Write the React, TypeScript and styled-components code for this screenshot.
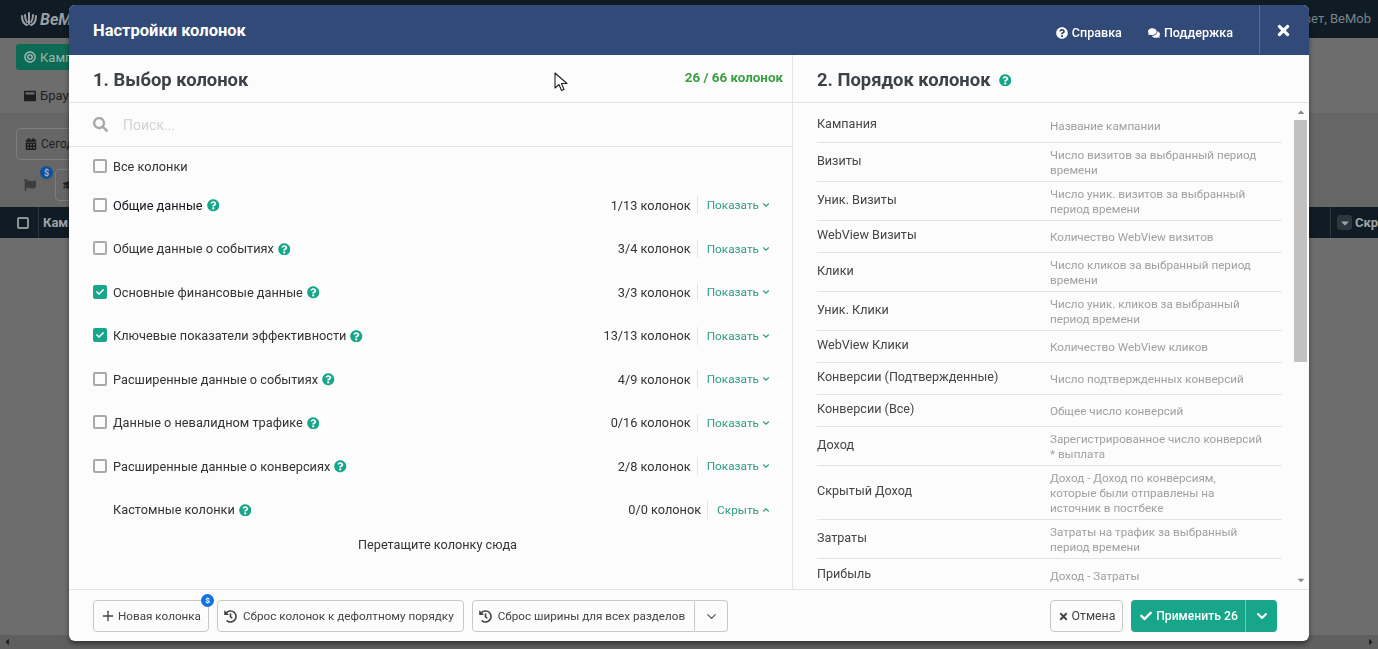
import React from "react";
import styled, { createGlobalStyle } from "styled-components";
import { FaCheck, FaComments, FaQuestionCircle, FaSearch, FaTimes, FaCalendarAlt, FaFlag, FaCaretDown, FaCaretUp, FaCaretLeft, FaCaretRight, FaBullseye, FaWindowMaximize, FaGraduationCap, FaHistory } from "react-icons/fa";
import { FiChevronDown, FiChevronUp, FiPlus } from "react-icons/fi";

const GlobalStyle = createGlobalStyle`
  html, body {
    margin: 0;
    height: 100%;
    overflow: hidden;
    background: #6d6d6d;
  }
  * {
    box-sizing: border-box;
  }
`;

type GroupType = {
  name: string;
  count: string;
  checked?: boolean;
  dark?: boolean;
};

const groups: GroupType[] = [
  { name: "Общие данные", count: "1/13 колонок", dark: true },
  { name: "Общие данные о событиях", count: "3/4 колонок" },
  { name: "Основные финансовые данные", count: "3/3 колонок", checked: true },
  { name: "Ключевые показатели эффективности", count: "13/13 колонок", checked: true },
  { name: "Расширенные данные о событиях", count: "4/9 колонок" },
  { name: "Данные о невалидном трафике", count: "0/16 колонок" },
  { name: "Расширенные данные о конверсиях", count: "2/8 колонок" },
];

const orderRows = [
  { name: "Кампания", desc: "Название кампании", height: 40 },
  { name: "Визиты", desc: "Число визитов за выбранный период времени", height: 39 },
  { name: "Уник. Визиты", desc: "Число уник. визитов за выбранный период времени", height: 39 },
  { name: "WebView Визиты", desc: "Количество WebView визитов", height: 32 },
  { name: "Клики", desc: "Число кликов за выбранный период времени", height: 39 },
  { name: "Уник. Клики", desc: "Число уник. кликов за выбранный период времени", height: 39 },
  { name: "WebView Клики", desc: "Количество WebView кликов", height: 32 },
  { name: "Конверсии (Подтвержденные)", desc: "Число подтвержденных конверсий", height: 32 },
  { name: "Конверсии (Все)", desc: "Общее число конверсий", height: 32 },
  { name: "Доход", desc: "Зарегистрированное число конверсий * выплата", height: 39 },
  { name: "Скрытый Доход", desc: "Доход - Доход по конверсиям, которые были отправлены на источник в постбеке", height: 54 },
  { name: "Затраты", desc: "Затраты на трафик за выбранный период времени", height: 39 },
  { name: "Прибыль", desc: "Доход - Затраты", height: 32 },
];

const Help = () => (
  <HelpIcon>
    <FaQuestionCircle />
  </HelpIcon>
);

export default function App() {
  return (
    <>
      <GlobalStyle />
      <Page>
        <TopBar>
          <Logo>
            <svg width="18" height="16" viewBox="0 0 18 16" fill="none" stroke="#9a9fa3" strokeWidth="2" strokeLinecap="round">
              <path d="M2 5c0 5 2 8 5 9" />
              <path d="M9 2v11" />
              <path d="M16 5c0 5-2 8-5 9" />
              <path d="M5 4c0 3 .5 5 2 7" />
              <path d="M13 4c0 3-.5 5-2 7" />
            </svg>
            BeMob
          </Logo>
          <Greeting>Привет, BeMob</Greeting>
        </TopBar>
        <TabsRow>
          <GreenTab>
            <FaBullseye />
            Кампании
          </GreenTab>
        </TabsRow>
        <BrowserRow>
          <FaWindowMaximize />
          Браузер
        </BrowserRow>
        <FilterRow>
          <DateButton>
            <FaCalendarAlt />
            Сегодня
          </DateButton>
        </FilterRow>
        <ActionRow>
          <FaFlag />
          <DollarDot>$</DollarDot>
          <GhostButton>
            <FaGraduationCap />
          </GhostButton>
        </ActionRow>
        <TableHead>
          <HeadCheck />
          <HeadCell>Кампания</HeadCell>
          <HeadRight>
            <FilterBadge>
              <FaCaretDown />
            </FilterBadge>
            Скр
          </HeadRight>
        </TableHead>
        <PageScroll>
          <FaCaretLeft />
          <FaCaretRight />
        </PageScroll>
      </Page>

      <Overlay>
        <Modal>
          <ModalHeader>
            <ModalTitle>Настройки колонок</ModalTitle>
            <HeaderLink>
              <FaQuestionCircle />
              Справка
            </HeaderLink>
            <HeaderLink>
              <FaComments />
              Поддержка
            </HeaderLink>
            <CloseButton>
              <FaTimes />
            </CloseButton>
          </ModalHeader>

          <ModalBody>
            <LeftPane>
              <SectionHeader>
                <SectionTitle>1. Выбор колонок</SectionTitle>
                <Counter>26 / 66 колонок</Counter>
              </SectionHeader>
              <SearchRow>
                <FaSearch />
                <SearchText>Поиск...</SearchText>
              </SearchRow>
              <GroupList>
                <AllRow>
                  <CheckBox />
                  <GroupName>Все колонки</GroupName>
                </AllRow>
                {groups.map((group) => (
                  <GroupRow key={group.name}>
                    <CheckBox checked={group.checked}>{group.checked && <FaCheck />}</CheckBox>
                    <GroupName dark={group.dark}>{group.name}</GroupName>
                    <Help />
                    <GroupCount>{group.count}</GroupCount>
                    <ToggleLink>
                      Показать
                      <FiChevronDown />
                    </ToggleLink>
                  </GroupRow>
                ))}
                <CustomRow>
                  <GroupName>Кастомные колонки</GroupName>
                  <Help />
                  <GroupCount>0/0 колонок</GroupCount>
                  <ToggleLink>
                    Скрыть
                    <FiChevronUp />
                  </ToggleLink>
                </CustomRow>
                <DropHint>Перетащите колонку сюда</DropHint>
              </GroupList>
            </LeftPane>

            <RightPane>
              <SectionHeader>
                <SectionTitle>2. Порядок колонок</SectionTitle>
                <Help />
              </SectionHeader>
              <OrderArea>
                <OrderList>
                  {orderRows.map((row) => (
                    <OrderRow key={row.name} rowHeight={row.height}>
                      <OrderName>{row.name}</OrderName>
                      <OrderDesc>{row.desc}</OrderDesc>
                    </OrderRow>
                  ))}
                </OrderList>
                <ScrollTrack>
                  <FaCaretUp />
                  <ScrollThumb />
                  <FaCaretDown />
                </ScrollTrack>
              </OrderArea>
            </RightPane>
          </ModalBody>

          <ModalFooter>
            <FooterButton rightPad={7}>
              <PlusIcon />
              Новая колонка
              <NewBadge>$</NewBadge>
            </FooterButton>
            <FooterButton>
              <FaHistory />
              Сброс колонок к дефолтному порядку
            </FooterButton>
            <SplitGroup>
              <FooterButton joined>
                <FaHistory />
                Сброс ширины для всех разделов
              </FooterButton>
              <CaretButton>
                <FiChevronDown />
              </CaretButton>
            </SplitGroup>
            <FooterSpacer />
            <CancelButton>
              <FaTimes />
              Отмена
            </CancelButton>
            <ApplyGroup>
              <ApplyButton>
                <FaCheck />
                Применить 26
              </ApplyButton>
              <ApplyCaret>
                <FiChevronDown />
              </ApplyCaret>
            </ApplyGroup>
          </ModalFooter>
        </Modal>
        <Cursor viewBox="0 0 14 20" width="14" height="20">
          <path d="M1 1v15l4-3.5 2.5 6 2.5-1-2.5-6H13z" fill="#fff" stroke="#222" strokeWidth="1.1" strokeLinejoin="round" />
        </Cursor>
      </Overlay>
    </>
  );
}

const Page = styled.div`
  height: 649px;
  display: flex;
  flex-direction: column;
  background: #6d6d6d;
  font-family: Roboto, sans-serif;
  color: #1c1c1c;
  overflow: hidden;
`;

const TopBar = styled.div`
  height: 38px;
  flex-shrink: 0;
  background: #101c24;
  display: flex;
  align-items: center;
  justify-content: space-between;
  padding: 0 7px 0 20px;
  color: #79848b;
`;

const Logo = styled.div`
  display: flex;
  align-items: center;
  gap: 2px;
  font-size: 16px;
  font-weight: 700;
  font-style: italic;
  color: #9a9fa3;
`;

const Greeting = styled.div`
  font-size: 13px;
  margin-top: -1px;
  white-space: nowrap;
`;

const TabsRow = styled.div`
  height: 40px;
  flex-shrink: 0;
  padding: 6px 0 0 16px;
`;

const GreenTab = styled.div`
  width: 90px;
  height: 26px;
  border-radius: 3px;
  background: #0b6b55;
  color: #9fb5ae;
  font-size: 13px;
  display: flex;
  align-items: center;
  gap: 4px;
  padding-left: 8px;
  > svg {
    font-size: 12px;
  }
`;

const BrowserRow = styled.div`
  height: 35px;
  flex-shrink: 0;
  display: flex;
  align-items: center;
  gap: 4px;
  padding: 0 0 0 24px;
  font-size: 13px;
  color: #1e1e1e;
  > svg {
    font-size: 12px;
  }
`;

const FilterRow = styled.div`
  height: 50px;
  flex-shrink: 0;
  background: #666666;
  padding: 15px 0 0 16px;
`;

const DateButton = styled.div`
  width: 90px;
  height: 32px;
  border: 1px solid #7d7d7d;
  border-radius: 4px;
  display: flex;
  align-items: center;
  gap: 4px;
  padding-left: 8px;
  font-size: 12px;
  color: #1e1e1e;
  > svg {
    font-size: 12px;
  }
`;

const ActionRow = styled.div`
  height: 44px;
  flex-shrink: 0;
  background: #666666;
  position: relative;
  display: flex;
  align-items: center;
  padding: 0 0 0 24px;
  > svg {
    font-size: 12px;
    color: #3e3e3e;
  }
`;

const DollarDot = styled.div`
  position: absolute;
  left: 40px;
  top: 3px;
  width: 13px;
  height: 13px;
  border-radius: 50%;
  background: #0f4f9c;
  color: #a8b9cf;
  font-size: 9px;
  font-weight: 700;
  display: flex;
  align-items: center;
  justify-content: center;
`;

const GhostButton = styled.div`
  width: 30px;
  height: 32px;
  margin-left: 19px;
  border: 1px solid #7d7d7d;
  border-radius: 4px;
  display: flex;
  align-items: center;
  padding-left: 7px;
  font-size: 12px;
  color: #1e1e1e;
`;

const TableHead = styled.div`
  height: 31px;
  flex-shrink: 0;
  background: #101c24;
  display: flex;
  align-items: center;
  color: #9aa3a8;
  font-size: 13px;
  font-weight: 700;
  padding-left: 17px;
`;

const HeadCheck = styled.div`
  width: 12px;
  height: 12px;
  border: 2px solid #8b9498;
  border-radius: 2px;
`;

const HeadCell = styled.div`
  margin-left: 9px;
  padding-left: 4px;
  border-left: 1px solid #2b363d;
  line-height: 31px;
`;

const HeadRight = styled.div`
  margin-left: auto;
  width: 48px;
  height: 31px;
  padding-left: 6px;
  border-left: 1px solid #2b363d;
  display: flex;
  align-items: center;
  gap: 3px;
  white-space: nowrap;
  flex-shrink: 0;
`;

const FilterBadge = styled.div`
  width: 15px;
  height: 15px;
  flex-shrink: 0;
  border-radius: 3px;
  background: #2b363d;
  color: #9aa3a8;
  font-size: 12px;
  display: flex;
  align-items: center;
  justify-content: center;
`;

const PageScroll = styled.div`
  margin-top: auto;
  height: 14px;
  flex-shrink: 0;
  background: #5f5f5f;
  display: flex;
  align-items: center;
  justify-content: space-between;
  padding: 0 2px;
  color: #1e1e1e;
  font-size: 10px;
`;

const Overlay = styled.div`
  position: fixed;
  inset: 0;
  padding: 5px 69px 8px;
  font-family: Roboto, sans-serif;
`;

const Cursor = styled.svg`
  position: absolute;
  left: 554px;
  top: 72px;
`;

const Modal = styled.div`
  width: 1240px;
  height: 636px;
  display: flex;
  flex-direction: column;
  background: #fcfcfc;
  border-radius: 6px;
  overflow: hidden;
  box-shadow: 0 3px 5px rgba(0, 0, 0, 0.45);
`;

const ModalHeader = styled.div`
  height: 50px;
  flex-shrink: 0;
  background: #324a77;
  display: flex;
  align-items: center;
  padding-left: 24px;
  color: #ffffff;
`;

const ModalTitle = styled.div`
  font-size: 16.5px;
  font-weight: 700;
  margin-right: auto;
  margin-top: 1px;
`;

const HeaderLink = styled.div`
  display: flex;
  align-items: center;
  gap: 4px;
  font-size: 12.6px;
  font-weight: 500;
  margin-top: 5px;
  margin-right: 26px;
  > svg {
    font-size: 12px;
  }
`;

const CloseButton = styled.div`
  width: 50px;
  height: 50px;
  border-left: 1px solid #5a6f96;
  display: flex;
  align-items: center;
  justify-content: center;
  font-size: 17px;
  padding-right: 2px;
`;

const ModalBody = styled.div`
  flex: 1;
  min-height: 0;
  display: flex;
  border-bottom: 1px solid #e4e4e4;
`;

const LeftPane = styled.div`
  width: 724px;
  flex-shrink: 0;
  border-right: 1px solid #e4e4e4;
  display: flex;
  flex-direction: column;
`;

const RightPane = styled.div`
  flex: 1;
  min-width: 0;
  display: flex;
  flex-direction: column;
`;

const SectionHeader = styled.div`
  height: 48px;
  flex-shrink: 0;
  border-bottom: 1px solid #e4e4e4;
  display: flex;
  align-items: center;
  padding: 0 9px 0 24px;
  > span {
    margin-top: 3px;
  }
`;

const SectionTitle = styled.div`
  font-size: 18.4px;
  font-weight: 700;
  color: #3c4247;
  margin-right: 4px;
  margin-top: 1px;
`;

const Counter = styled.div`
  margin-left: auto;
  margin-top: -3px;
  color: #39a041;
  font-size: 13.4px;
  font-weight: 700;
`;

const SearchRow = styled.div`
  height: 44px;
  flex-shrink: 0;
  border-bottom: 1px solid #e4e4e4;
  display: flex;
  align-items: center;
  padding-left: 24px;
  > svg {
    font-size: 15px;
    color: #a8a8a8;
  }
`;

const SearchText = styled.div`
  margin-left: 15px;
  font-size: 14px;
  color: #d2d2d2;
`;

const GroupList = styled.div`
  flex: 1;
  display: flex;
  flex-direction: column;
  padding: 0 21px 0 24px;
`;

const AllRow = styled.div`
  height: 36.5px;
  padding-top: 2px;
  display: flex;
  align-items: center;
  flex-shrink: 0;
`;

const GroupRow = styled.div`
  height: 43.5px;
  display: flex;
  align-items: center;
  flex-shrink: 0;
`;

const CustomRow = styled(GroupRow)`
  padding-left: 20px;
`;

const CheckBox = styled.div<{ checked?: boolean }>`
  width: 14px;
  height: 14px;
  flex-shrink: 0;
  margin-top: -1px;
  border-radius: 2px;
  border: ${(props) => (props.checked ? "none" : "2px solid #a9a9a9")};
  background: ${(props) => (props.checked ? "#17a689" : "transparent")};
  color: #ffffff;
  font-size: 8px;
  display: flex;
  align-items: center;
  justify-content: center;
  margin-right: 6px;
`;

const GroupName = styled.div<{ dark?: boolean }>`
  font-size: 12.75px;
  color: ${(props) => (props.dark ? "#14141c" : "#333333")};
  white-space: nowrap;
`;

const HelpIcon = styled.span`
  display: inline-flex;
  margin-left: 4px;
  font-size: 12.5px;
  color: #17a689;
`;

const GroupCount = styled.div`
  margin-left: auto;
  font-size: 12.75px;
  color: #333333;
  white-space: nowrap;
`;

const ToggleLink = styled.div`
  margin-left: 6px;
  padding-left: 9px;
  height: 18px;
  border-left: 1px solid #e4e4e4;
  display: flex;
  align-items: center;
  gap: 2px;
  font-size: 11.8px;
  color: #2e9e83;
  white-space: nowrap;
  > svg {
    font-size: 10px;
    stroke-width: 2.6;
  }
`;

const DropHint = styled.div`
  margin-top: 5px;
  text-align: center;
  font-size: 12.7px;
  color: #333333;
  padding-left: 11px;
`;

const OrderArea = styled.div`
  flex: 1;
  min-height: 0;
  display: flex;
  padding-right: 2px;
`;

const OrderList = styled.div`
  flex: 1;
  min-width: 0;
  overflow: hidden;
  padding: 0 12px 0 24px;
`;

const OrderRow = styled.div<{ rowHeight: number }>`
  height: ${(props) => props.rowHeight}px;
  border-bottom: 1px solid #e4e4e4;
  display: flex;
  align-items: center;
  &:first-child {
    padding-top: 6px;
  }
  &:last-child {
    border-bottom: none;
  }
`;

const OrderName = styled.div`
  width: 233px;
  flex-shrink: 0;
  margin-top: -4px;
  font-size: 12.6px;
  color: #454545;
  white-space: nowrap;
`;

const OrderDesc = styled.div`
  width: 213.5px;
  margin-top: 2px;
  font-size: 11.66px;
  line-height: 15px;
  color: #a0a0a0;
`;

const ScrollTrack = styled.div`
  width: 13px;
  flex-shrink: 0;
  display: flex;
  flex-direction: column;
  align-items: center;
  justify-content: space-between;
  color: #8a8a8a;
  font-size: 10px;
  padding: 4px 0;
`;

const ScrollThumb = styled.div`
  width: 13px;
  height: 242px;
  background: #c1c1c1;
  margin: 3px 0 auto;
`;

const ModalFooter = styled.div`
  height: 51px;
  flex-shrink: 0;
  display: flex;
  align-items: flex-start;
  gap: 8px;
  padding: 10px 32px 0 24px;
`;

const FooterSpacer = styled.div`
  flex: 1;
`;

const FooterButton = styled.div<{ joined?: boolean; rightPad?: number }>`
  position: relative;
  height: 32px;
  display: flex;
  align-items: center;
  gap: 6px;
  padding: 0 ${(props) => props.rightPad ?? 9}px 0 6px;
  font-size: 11.7px;
  color: #444444;
  white-space: nowrap;
  border: 1px solid #c8c8c8;
  border-radius: ${(props) => (props.joined ? "4px 0 0 4px" : "4px")};
  > svg {
    font-size: 13px;
    color: #444444;
  }
`;

const PlusIcon = styled(FiPlus)`
  margin-right: -4px;
  && {
    font-size: 16px;
  }
`;

const NewBadge = styled.span`
  position: absolute;
  right: -6px;
  top: -7px;
  width: 13px;
  height: 13px;
  border-radius: 50%;
  background: #1272e3;
  color: #ffffff;
  font-size: 8px;
  font-weight: 700;
  display: flex;
  align-items: center;
  justify-content: center;
`;

const SplitGroup = styled.div`
  display: flex;
`;

const CaretButton = styled.div`
  width: 33px;
  height: 32px;
  border: 1px solid #c8c8c8;
  border-left: none;
  border-radius: 0 4px 4px 0;
  display: flex;
  align-items: center;
  justify-content: center;
  font-size: 15px;
  color: #555555;
`;

const CancelButton = styled.div`
  width: 73px;
  height: 32px;
  border: 1px solid #c8c8c8;
  border-radius: 4px;
  display: flex;
  align-items: center;
  justify-content: center;
  gap: 3px;
  font-size: 12.3px;
  color: #444444;
  > svg {
    font-size: 11px;
  }
`;

const ApplyGroup = styled.div`
  display: flex;
  height: 32px;
  border-radius: 4px;
  background: #17a689;
  color: #ffffff;
`;

const ApplyButton = styled.div`
  width: 115px;
  display: flex;
  align-items: center;
  justify-content: center;
  gap: 4px;
  padding-left: 2px;
  font-size: 12.2px;
  font-weight: 500;
  border-right: 1px solid #6cc4b2;
  > svg {
    font-size: 12px;
  }
`;

const ApplyCaret = styled.div`
  width: 31px;
  display: flex;
  align-items: center;
  justify-content: center;
  font-size: 16px;
  > svg {
    stroke-width: 3;
  }
`;
